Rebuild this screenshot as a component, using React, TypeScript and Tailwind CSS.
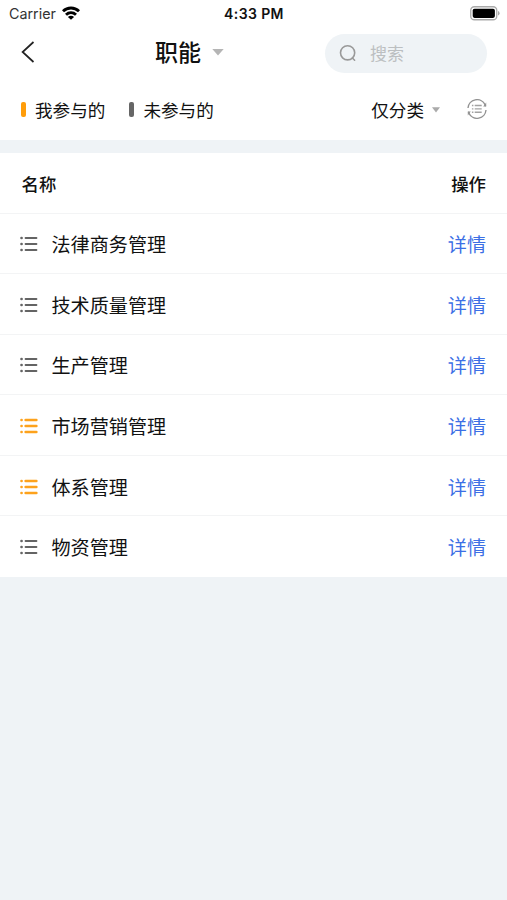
import React from "react";

type Item = { name: string; joined: boolean };

const items: Item[] = [
  { name: "法律商务管理", joined: false },
  { name: "技术质量管理", joined: false },
  { name: "生产管理", joined: false },
  { name: "市场营销管理", joined: true },
  { name: "体系管理", joined: true },
  { name: "物资管理", joined: false },
];

function ListIcon({ joined }: { joined: boolean }) {
  return (
    <svg
      width="18"
      height="18"
      viewBox="0 0 18 18"
      fill="none"
      stroke="currentColor"
      strokeWidth={joined ? 2.5 : 2}
      strokeLinecap="round"
      className={joined ? "text-[#fda21c]" : "text-[#646464]"}
    >
      <path d="M5.6 3H16.4M5.6 9H16.4M5.6 15H16.4" />
      <path d="M1.5 3H1.6M1.5 9H1.6M1.5 15H1.6" strokeWidth="2.6" />
    </svg>
  );
}

function StatusBar() {
  return (
    <div className="grid h-[27px] grid-cols-3 items-center pl-[9px] pr-[7px] leading-none">
      <div className="flex items-center gap-[6px] text-[#333]">
        <span className="mt-px text-[14.3px]">Carrier</span>
        <svg width="18" height="14" viewBox="0 0 18 14" fill="none" stroke="#000" strokeWidth="2.9" className="-mt-px">
          <path d="M1 5.2C5.5 .9 12.5 .9 17 5.2" />
          <path d="M4 8.7C6.9 6 11.1 6 14 8.7" />
          <path d="M9 13.8L5.9 10.9C7.7 9.3 10.3 9.3 12.1 10.9Z" fill="#000" stroke="none" />
        </svg>
      </div>
      <div className="-ml-px text-center text-[14px] font-semibold tracking-[0.4px] whitespace-nowrap">4:33 PM</div>
      <div className="flex justify-end">
        <svg width="30" height="15" viewBox="0 0 30 15">
          <rect x=".75" y=".75" width="26" height="13" rx="3.6" fill="#fff" stroke="#aaa" strokeWidth="1.3" />
          <rect x="2.7" y="2.7" width="22.2" height="9.2" rx="1.8" fill="#000" />
          <path d="M28 5V9.6Q29.6 9 29.6 7.3T28 5Z" fill="#aaa" />
        </svg>
      </div>
    </div>
  );
}

export default function App() {
  return (
    <div className="h-[900px] w-[507px] overflow-hidden bg-[#eff3f6] font-['Inter','Noto_Sans_CJK_SC',sans-serif] text-[#111]">
      <header className="h-[140px] bg-white">
        <StatusBar />
        <div className="flex h-[53px] items-center pl-[21px] pr-5">
          <svg width="14" height="22" viewBox="0 0 14 22" fill="none" stroke="#222" strokeWidth="1.7" className="-mt-[3px]">
            <path d="M12.5 1L1.6 11L12.5 21" />
          </svg>
          <h1 className="ml-[120px] text-[23px] font-medium leading-none">职能</h1>
          <svg width="12" height="7" viewBox="0 0 12 7" className="-mt-[3px] ml-[11px]">
            <path d="M.3 0H11.7L6 6.5Z" fill="#b5b5b5" />
          </svg>
          <div className="ml-auto flex h-[39px] w-[162px] items-center rounded-full bg-[#eff3f6] pl-[14px]">
            <svg width="18" height="18" viewBox="0 0 18 18" fill="none" stroke="#999" strokeWidth="1.6" strokeLinecap="round" className="-mt-[2px]">
              <circle cx="8.6" cy="8.8" r="7.1" />
              <path d="M13.4 14L15.6 16.2" />
            </svg>
            <span className="ml-[13px] pt-px text-[17px] leading-none text-[#bcbfc1]">搜索</span>
          </div>
        </div>
        <div className="flex h-[60px] items-center pl-[21px] pr-5 text-[17.6px] leading-none">
          <i className="-mt-px h-[15px] w-[5px] rounded-[2px] bg-[#ff9d0a]" />
          <span className="ml-[9px] pt-px">我参与的</span>
          <i className="-mt-px ml-[24px] h-[15px] w-[5px] rounded-[2px] bg-[#666]" />
          <span className="ml-[9px] pt-px">未参与的</span>
          <span className="ml-auto pt-px">仅分类</span>
          <svg width="8" height="6" viewBox="0 0 8 6" className="-mt-px ml-[8px]">
            <path d="M0 .3H8L4 5.5Z" fill="#aaa" />
          </svg>
          <svg width="20" height="20" viewBox="0 0 20 20" fill="none" stroke="#929292" strokeWidth="1.4" className="-mt-[2px] ml-[27px]">
            <path d="M1 9A9 9 0 0 1 18 5.6L18.6 7.2M19 11A9 9 0 0 1 2 14.4L1.4 12.8" />
            <path d="M19.2 3.6V7.6H16.2ZM.8 16.4V12.4H3.8Z" fill="#929292" stroke="none" />
            <path d="M7.7 6.5H14.7M7.7 9.9H14.7M7.7 13.3H14.7M4.9 6.5H6.4M4.9 9.9H6.4M4.9 13.3H6.4" strokeOpacity=".85" />
          </svg>
        </div>
      </header>
      <main className="mt-[13px] bg-white">
        <div className="flex h-[60.5px] items-center justify-between border-b border-[#f3f4f5] pl-[21.5px] pr-[21px] pt-[4px] text-[17.4px] font-medium leading-none">
          <span>名称</span>
          <span>操作</span>
        </div>
        {items.map((item) => (
          <div key={item.name} className="flex h-[60.6px] items-center border-b border-[#f3f4f5] pl-[20px] pr-[21px] pt-[2px] text-[19.1px] leading-none last:border-transparent">
            <ListIcon joined={item.joined} />
            <span className="ml-[13.5px] pt-[3px]">{item.name}</span>
            <a className="ml-auto pt-[3px] text-[#3c6fe5]">详情</a>
          </div>
        ))}
      </main>
    </div>
  );
}
